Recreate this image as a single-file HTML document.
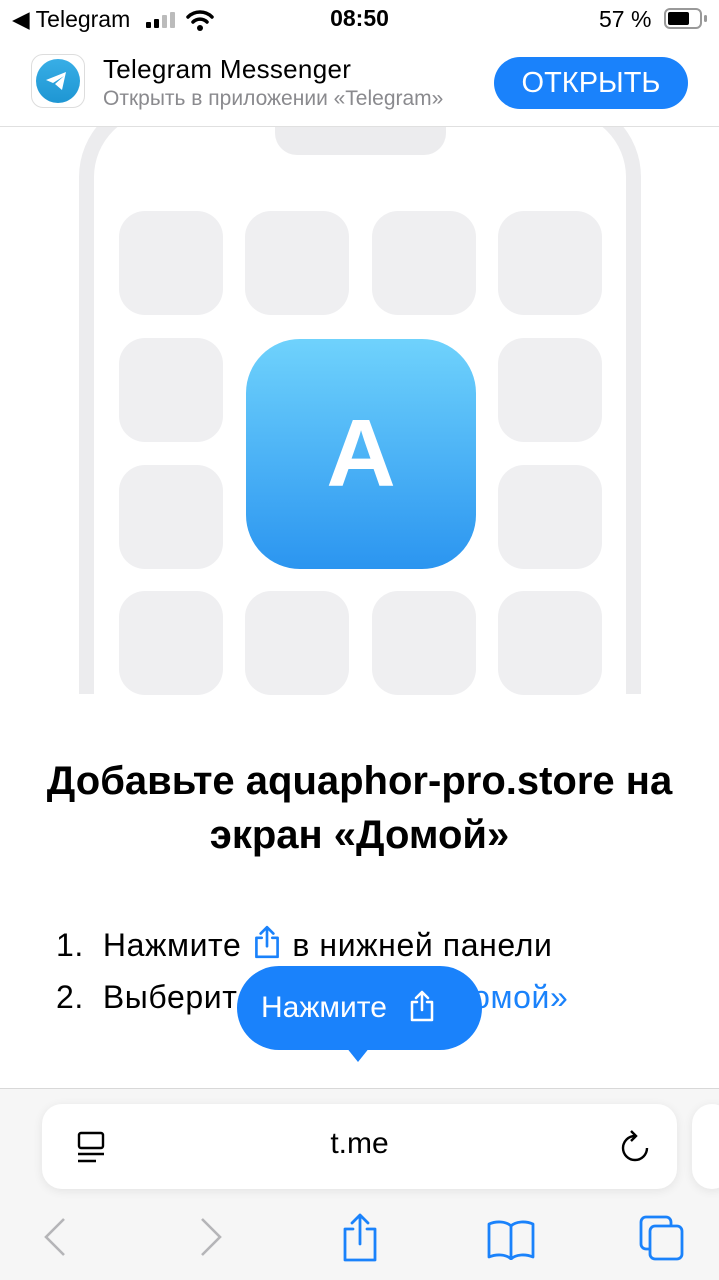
<!DOCTYPE html>
<html><head><meta charset="utf-8"><style>
*{margin:0;padding:0;box-sizing:border-box}
body{width:719px;height:1280px;position:relative;overflow:hidden;background:#fff;font-family:"Liberation Sans",sans-serif;color:#000}
.a{position:absolute}
.sq{position:absolute;width:104px;height:104px;border-radius:26px;background:#efeff1}
</style></head><body>
<!-- status bar -->
<div class="a" style="left:12px;top:6px;font-size:23px">◀ Telegram</div>
<div class="a" style="left:146px;top:12px;width:32px;height:16px">
<div class="a" style="left:0;top:10px;width:5px;height:6px;background:#000;border-radius:1px"></div>
<div class="a" style="left:8px;top:7px;width:5px;height:9px;background:#000;border-radius:1px"></div>
<div class="a" style="left:16px;top:3px;width:5px;height:13px;background:#bbb;border-radius:1px"></div>
<div class="a" style="left:24px;top:0;width:5px;height:16px;background:#bbb;border-radius:1px"></div>
</div>
<svg class="a" style="left:186px;top:9px" width="28" height="22" viewBox="0 0 28 22"><path d="M2 8 A17 17 0 0 1 26 8" stroke="#000" stroke-width="3.5" fill="none" stroke-linecap="round"/><path d="M7 13 A10 10 0 0 1 21 13" stroke="#000" stroke-width="3.5" fill="none" stroke-linecap="round"/><circle cx="14" cy="19" r="3" fill="#000"/></svg>
<div class="a" style="left:0;width:719px;text-align:center;top:5px;font-size:23px;font-weight:bold">08:50</div>
<div class="a" style="left:599px;top:6px;font-size:23px">57 %</div>
<div class="a" style="left:664px;top:8px;width:38px;height:21px;border:2px solid #999;border-radius:6px"><div style="margin:2px;width:21px;height:13px;background:#000;border-radius:2px"></div></div>
<div class="a" style="left:704px;top:15px;width:3px;height:7px;background:#999;border-radius:2px"></div>
<!-- banner -->
<div class="a" style="left:31px;top:54px;width:54px;height:54px;border-radius:12px;border:1px solid #ddd;background:#fff"></div>
<div class="a" style="left:36px;top:59px;width:44px;height:44px;border-radius:50%;background:linear-gradient(#38aee6,#1e96d3)"></div>
<svg class="a" style="left:44px;top:70px" width="26" height="22" viewBox="0 0 26 22"><path d="M2 10 L22 2 L18 20 L11 14 L20 6 L9 13 Z" fill="#fff"/></svg>
<div class="a" style="left:103px;top:54px;font-size:26px;letter-spacing:0.3px">Telegram Messenger</div>
<div class="a" style="left:103px;top:87px;font-size:21px;color:#8a8a8e">Открыть в приложении «Telegram»</div>
<div class="a" style="left:494px;top:57px;width:194px;height:52px;border-radius:26px;background:#1a82fb;color:#fff;font-size:29px;text-align:center;line-height:52px">ОТКРЫТЬ</div>
<div class="a" style="left:0;top:126px;width:719px;height:1px;background:#e0e0e0"></div>
<!-- phone -->
<div class="a" style="left:0;top:127px;width:719px;height:567px;overflow:hidden">
<div class="a" style="left:79px;top:-30px;width:562px;height:640px;border:15px solid #ececee;border-bottom:none;border-radius:80px 80px 0 0"></div>
<div class="a" style="left:275px;top:-10px;width:171px;height:38px;background:#ececee;border-radius:0 0 22px 22px"></div>
</div>
<div class="sq" style="left:119px;top:211px"></div><div class="sq" style="left:245px;top:211px"></div><div class="sq" style="left:372px;top:211px"></div><div class="sq" style="left:498px;top:211px"></div>
<div class="sq" style="left:119px;top:338px"></div><div class="sq" style="left:498px;top:338px"></div>
<div class="sq" style="left:119px;top:465px"></div><div class="sq" style="left:498px;top:465px"></div>
<div class="sq" style="left:119px;top:591px"></div><div class="sq" style="left:245px;top:591px"></div><div class="sq" style="left:372px;top:591px"></div><div class="sq" style="left:498px;top:591px"></div>
<div class="a" style="left:246px;top:339px;width:230px;height:230px;border-radius:54px;background:linear-gradient(#6fd2fc,#2b95f0);color:#fff;font-size:96px;font-weight:bold;text-align:center;line-height:230px">A</div>
<!-- title -->
<div class="a" style="left:-20px;width:759px;top:754px;text-align:center;font-size:40px;font-weight:bold;line-height:54px">Добавьте aquaphor-pro.store на<br>экран «Домой»</div>
<div class="a" style="left:56px;top:924px;font-size:32px;letter-spacing:0.6px;white-space:nowrap">1.&nbsp; Нажмите <svg width="32" height="36" viewBox="0 0 30 34" style="vertical-align:-4px"><path d="M10 13H5v18h20V13h-5M15 3v18M9 9l6-6 6 6" stroke="#1a82fb" stroke-width="2.5" fill="none" stroke-linecap="round" stroke-linejoin="round"/></svg> в нижней панели</div>
<div class="a" style="left:56px;top:979px;font-size:32px;letter-spacing:0.6px;white-space:nowrap">2.&nbsp; Выберите <span style="color:#1a82fb">«На экран «Домой»</span></div>
<div class="a" style="left:237px;top:966px;width:245px;height:84px;border-radius:42px;background:#1a82fb;color:#fff;font-size:30px;line-height:84px;padding-left:24px;white-space:nowrap">Нажмите <svg width="30" height="34" viewBox="0 0 30 34" style="vertical-align:-6px;margin-left:12px"><path d="M10 13H5v18h20V13h-5M15 3v18M9 9l6-6 6 6" stroke="#fff" stroke-width="2.5" fill="none" stroke-linecap="round" stroke-linejoin="round"/></svg></div>
<div class="a" style="left:342px;top:1042px;width:0;height:0;border-left:16px solid transparent;border-right:16px solid transparent;border-top:20px solid #1a82fb"></div>
<!-- bottom bar -->
<div class="a" style="left:0;top:1088px;width:719px;height:192px;background:#f6f6f6;border-top:1px solid #d8d8d8"></div>
<div class="a" style="left:42px;top:1104px;width:635px;height:85px;border-radius:20px;background:#fff;box-shadow:0 2px 10px rgba(0,0,0,.08)"></div>
<div class="a" style="left:692px;top:1104px;width:40px;height:85px;border-radius:20px;background:#fff;box-shadow:0 2px 10px rgba(0,0,0,.08)"></div>
<svg class="a" style="left:76px;top:1130px" width="32" height="34" viewBox="0 0 32 34"><rect x="3" y="3" width="24" height="15" rx="2" stroke="#000" stroke-width="2.4" fill="none"/><path d="M2 24h26M2 31h18" stroke="#000" stroke-width="2.4"/></svg>
<div class="a" style="left:0;width:719px;text-align:center;top:1127px;font-size:30px">t.me</div>
<svg class="a" style="left:618px;top:1128px" width="34" height="38" viewBox="0 0 34 38"><path d="M17 8A12 12 0 1 0 29 20" stroke="#000" stroke-width="2.4" fill="none"/><path d="M13 3l5 5-5 5" stroke="#000" stroke-width="2.4" fill="none"/></svg>
<svg class="a" style="left:40px;top:1215px" width="30" height="44" viewBox="0 0 30 44"><path d="M24 4L6 22l18 18" stroke="#b5b5b8" stroke-width="2.6" fill="none"/></svg>
<svg class="a" style="left:196px;top:1215px" width="30" height="44" viewBox="0 0 30 44"><path d="M6 4l18 18L6 40" stroke="#b5b5b8" stroke-width="2.6" fill="none"/></svg>
<svg class="a" style="left:340px;top:1212px" width="40" height="50" viewBox="0 0 40 50"><path d="M13 17H5v31h30V17h-8M20 3v29M12 11l8-8 8 8" stroke="#1a82fb" stroke-width="2.8" fill="none" stroke-linecap="round" stroke-linejoin="round"/></svg>
<svg class="a" style="left:486px;top:1218px" width="50" height="42" viewBox="0 0 50 42"><path d="M25 8C20 3 10 3 3 6v33c7-3 17-3 22 2 5-5 15-5 22-2V6C40 3 30 3 25 8zM25 8v33" stroke="#1a82fb" stroke-width="2.8" fill="none" stroke-linejoin="round"/></svg>
<svg class="a" style="left:638px;top:1214px" width="48" height="48" viewBox="0 0 48 48"><rect x="3" y="3" width="30" height="32" rx="5" stroke="#1a82fb" stroke-width="2.8" fill="#f6f6f6"/><rect x="12" y="12" width="32" height="33" rx="5" stroke="#1a82fb" stroke-width="2.8" fill="#f6f6f6"/></svg>
</body></html>
